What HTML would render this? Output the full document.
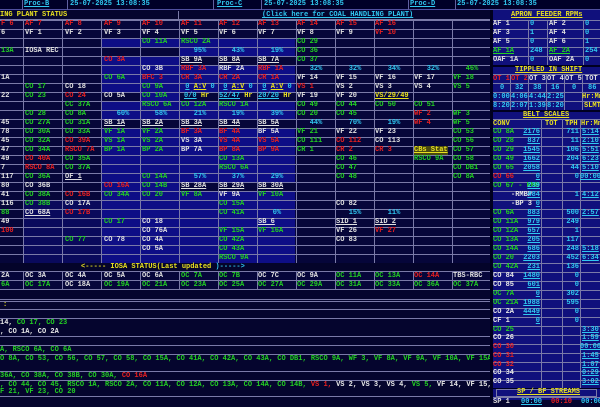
<!DOCTYPE html>
<html><head><meta charset="utf-8"><style>
*{margin:0;padding:0;box-sizing:border-box}
body{width:600px;height:400px;overflow:hidden;background:#05052e;font:bold 7px/9px "Liberation Mono",monospace;color:#e0e0e0;position:relative}
.a{position:absolute}
.R{position:absolute;left:0;width:490px;height:9px}
.R span{position:absolute;top:0;white-space:pre}
.c0{left:1px}.c1{left:25px}.c2{left:65px}.c3{left:104px}.c4{left:142px}.c5{left:181px}.c6{left:219px}.c7{left:258px}.c8{left:297px}.c9{left:336px}.c10{left:375px}.c11{left:414px}.c12{left:453px}
.m{width:38px;text-align:center}
.g{color:#22d022}.r{color:#e82020}.w{color:#e8e8e8}.c{color:#30c8f0}.y{color:#e8e020}
.u{text-decoration:underline}
.bl{background:#0e0e86}
.dk{background:#06063a}
.hl{background-image:repeating-linear-gradient(180deg,#7a7aa8 0 1px,transparent 1px 9px)}
.vl{background-image:repeating-linear-gradient(90deg,#7a7aa8 0 1px,transparent 1px 39px)}
.P span{position:absolute;white-space:pre}
.bs{position:absolute;left:493px;width:107px;height:9px}
.bs b{position:absolute;top:0;white-space:pre}
.bs .l{left:0}.bs .t{right:60px;color:#30c8f0;text-decoration:underline}.bs .p{right:21px;color:#30c8f0}.bs .h{left:89px;color:#30c8f0;text-decoration:underline}
</style></head><body>
<!-- header -->
<div class="a" style="left:0;top:0;width:600px;height:10px;background:#000028;border-bottom:1px solid #5050a0"></div>
<div class="a" style="left:22px;top:0;width:1px;height:10px;background:#6060a0"></div>
<div class="a" style="left:67px;top:0;width:1px;height:10px;background:#6060a0"></div>
<div class="a" style="left:213px;top:0;width:1px;height:10px;background:#6060a0"></div>
<div class="a" style="left:261px;top:0;width:1px;height:10px;background:#6060a0"></div>
<div class="a" style="left:408px;top:0;width:1px;height:10px;background:#6060a0"></div>
<div class="a" style="left:455px;top:0;width:1px;height:10px;background:#6060a0"></div>
<div class="a c u" style="left:24px;top:0">Proc-B</div>
<div class="a c" style="left:70px;top:0">25-07-2025 13:08:35</div>
<div class="a c u" style="left:217px;top:0">Proc-C</div>
<div class="a c" style="left:264px;top:0">25-07-2025 13:08:35</div>
<div class="a c u" style="left:410px;top:0">Proc-D</div>
<div class="a c" style="left:457px;top:0">25-07-2025 13:08:35</div>
<div class="a" style="left:0;top:11px;width:490px;height:9px;background:#05052e;border-bottom:1px solid #7a7aa8"></div>
<div class="a" style="left:178px;top:11px;width:1px;height:9px;background:#7a7aa8"></div>
<div class="a y" style="left:0;top:11px">ING PLANT STATUS</div>
<div class="a c u" style="left:262px;top:11px">(Click here for COAL HANDLING PLANT)</div>

<!-- backgrounds main grid -->
<div class="a dk" style="left:0;top:20px;width:490px;height:243px"></div>
<div class="a bl" style="left:102px;top:38px;width:193px;height:225px"></div>
<div class="a dk" style="left:102px;top:47px;width:77px;height:9px"></div>
<div class="a dk" style="left:179px;top:56px;width:116px;height:9px"></div>
<div class="a dk" style="left:102px;top:92px;width:38px;height:9px"></div>
<div class="a dk" style="left:179px;top:92px;width:116px;height:9px"></div>
<div class="a dk" style="left:102px;top:119px;width:193px;height:9px"></div>
<div class="a dk" style="left:179px;top:182px;width:116px;height:9px"></div>
<div class="a" style="left:23px;top:200px;width:79px;height:63px;background:#0a0a5c"></div>
<div class="a hl" style="left:0;top:20px;width:490px;height:244px"></div>
<div class="a vl" style="left:23px;top:20px;width:468px;height:243px"></div>

<div class="R" style="top:20px"><span class="c0 r">F 6</span><span class="c1 r">AF 7</span><span class="c2 r">AF 8</span><span class="c3 r">AF 9</span><span class="c4 r">AF 10</span><span class="c5 r">AF 11</span><span class="c6 r">AF 12</span><span class="c7 r">AF 13</span><span class="c8 r">AF 14</span><span class="c9 r">AF 15</span><span class="c10 r">AF 16</span></div>
<div class="R" style="top:29px"><span class="c0">6</span><span class="c1">VF 1</span><span class="c2">VF 2</span><span class="c3">VF 3</span><span class="c4">VF 4</span><span class="c5">VF 5</span><span class="c6">VF 6</span><span class="c7">VF 7</span><span class="c8">VF 8</span><span class="c9">VF 9</span><span class="c10 r">VF 10</span></div>
<div class="R" style="top:38px"><span class="c4 g">CO 11A</span><span class="c5 g">RSCO 2A</span><span class="c8 g">CO 29</span></div>
<div class="R" style="top:47px"><span class="c0 g">13A</span><span class="c1">IOSA REC</span><span class="c5 c m">95%</span><span class="c6 c m">43%</span><span class="c7 c m">19%</span><span class="c8 g">CO 36</span></div>
<div class="R" style="top:56px"><span class="c3 r">CO 3A</span><span class="c5 u">SB 9A</span><span class="c6 u">SB 8A</span><span class="c7 u">SB 7A</span><span class="c8 g">CO 37</span></div>
<div class="R" style="top:65px"><span class="c4">CO 3B</span><span class="c5 r">RBF 3A</span><span class="c6">RBF 2A</span><span class="c7 r">RBF 1A</span><span class="c8 c m">32%</span><span class="c9 c m">32%</span><span class="c10 c m">34%</span><span class="c11 c m">32%</span><span class="c12 g m">46%</span></div>
<div class="R" style="top:74px"><span class="c0">1A</span><span class="c3 g">CO 6A</span><span class="c4 r">BFC 3</span><span class="c5 r">CR 3A</span><span class="c6 r">CR 2A</span><span class="c7 r">CR 1A</span><span class="c8">VF 14</span><span class="c9">VF 15</span><span class="c10">VF 16</span><span class="c11">VF 17</span><span class="c12 g">VF 18</span></div>
<div class="R" style="top:83px"><span class="c1 g">CO 17</span><span class="c2">CO 18</span><span class="c4 g">CO 9A</span><span class="c5 m"><b class="c u">0</b> <b class="y u">A:V</b> <b class="c">0</b></span><span class="c6 m"><b class="c u">0</b> <b class="y u">A:V</b> <b class="c">0</b></span><span class="c7 m"><b class="c u">0</b> <b class="y u">A:V</b> <b class="c">0</b></span><span class="c8 r">VS 1</span><span class="c9">VS 2</span><span class="c10">VS 3</span><span class="c11">VS 4</span><span class="c12 g">VS 5</span></div>
<div class="R" style="top:92px"><span class="c0">22</span><span class="c1 g">CO 23</span><span class="c2 r">CO 24</span><span class="c3">CO 5A</span><span class="c4 g">CO 10A</span><span class="c5" style="left:184px"><b class="c u">0/0</b> <b class="y">Hr</b></span><span class="c6"><b class="c u">52/47</b> <b class="y">Hr</b></span><span class="c7"><b class="c u">20/20</b> <b class="y">Hr</b></span><span class="c8">VF 19</span><span class="c9">VF 20</span><span class="c10 y u">VS/29/49</span></div>
<div class="R" style="top:101px"><span class="c2 g">CC 37A</span><span class="c4 g">RSCO 6A</span><span class="c5 g">CO 12A</span><span class="c6 g">RSCO 1A</span><span class="c8 g">CO 49</span><span class="c9 g">CO 44</span><span class="c10 g">CO 50</span><span class="c11 g">CO 51</span></div>
<div class="R" style="top:110px"><span class="c1 g">CO 28</span><span class="c2 g">CO 8A</span><span class="c3 c m">60%</span><span class="c4 c m">58%</span><span class="c5 c m">21%</span><span class="c6 c m">19%</span><span class="c7 c m">39%</span><span class="c8 g">CO 20</span><span class="c9 g">CO 45</span><span class="c11 r">WF 2</span><span class="c12 g">WF 3</span></div>
<div class="R" style="top:119px"><span class="c0">45</span><span class="c1 g">CO 27A</span><span class="c2 g">CO 31A</span><span class="c3 u">SB 1A</span><span class="c4 u">SB 2A</span><span class="c5 u">SB 3A</span><span class="c6 u">SB 4A</span><span class="c7 u">SB 5A</span><span class="c8 c m">44%</span><span class="c9 c m">70%</span><span class="c10 c m">19%</span><span class="c11 r">WF 4</span><span class="c12 g">WF 5</span></div>
<div class="R" style="top:128px"><span class="c0">78</span><span class="c1 g">CO 30A</span><span class="c2 g">CO 33A</span><span class="c3 g">VF 1A</span><span class="c4 g">VF 2A</span><span class="c5 r">BF 3A</span><span class="c6 r">BF 4A</span><span class="c7">BF 5A</span><span class="c8 g">VF 21</span><span class="c9">VF 22</span><span class="c10">VF 23</span><span class="c12 g">CO 53</span></div>
<div class="R" style="top:137px"><span class="c0">45</span><span class="c1 g">CO 32A</span><span class="c2 r">CO 39A</span><span class="c3 g">VS 1A</span><span class="c4 g">VS 2A</span><span class="c5">VS 3A</span><span class="c6 r">VS 4A</span><span class="c7 r">VS 5A</span><span class="c8 g">CO 111</span><span class="c9 r">CO 112</span><span class="c10">CO 113</span><span class="c12 g">CO 56</span></div>
<div class="R" style="top:146px"><span class="c0">47</span><span class="c1 g">CO 34A</span><span class="c2 r">RSCO 7A</span><span class="c3 g">BP 1A</span><span class="c4 g">BP 2A</span><span class="c5">BP 7A</span><span class="c6 r">BP 8A</span><span class="c7 r">BP 9A</span><span class="c8 g">CR 1</span><span class="c9 r">CR 2</span><span class="c10 r">CR 3</span><span class="c11 y u" style="background:#4a4a10">CBs Stat</span><span class="c12 g">CO 57</span></div>
<div class="R" style="top:155px"><span class="c0">49</span><span class="c1 r">CO 40A</span><span class="c2 g">CO 35A</span><span class="c6 g">CO 13A</span><span class="c9 g">CO 46</span><span class="c11 g">RSCO 9A</span><span class="c12 g">CO 58</span></div>
<div class="R" style="top:164px"><span class="c0">7</span><span class="c1 r">RSCO 8A</span><span class="c2 g">CO 37A</span><span class="c6 g">RSCO 6A</span><span class="c9 g">CO 47</span><span class="c12 g">CO DB1</span></div>
<div class="R" style="top:173px"><span class="c0">117</span><span class="c1 g">CO 36A</span><span class="c2 u">OF 1</span><span class="c4 g">CO 14A</span><span class="c5 c m">57%</span><span class="c6 c m">37%</span><span class="c7 c m">29%</span><span class="c9 g">CO 48</span><span class="c12 g">CO 8A</span></div>
<div class="R" style="top:182px"><span class="c0">80</span><span class="c1">CO 36B</span><span class="c3 r">CO 16A</span><span class="c4 g">CO 14B</span><span class="c5 u">SB 28A</span><span class="c6 u">SB 29A</span><span class="c7 u">SB 30A</span></div>
<div class="R" style="top:191px"><span class="c0">41</span><span class="c1 g">CO 38A</span><span class="c2 r">CO 16B</span><span class="c3 g">CO 34A</span><span class="c4 g">CO 20</span><span class="c5 g">VF 8A</span><span class="c6">VF 9A</span><span class="c7 g">VF 10A</span></div>
<div class="R" style="top:200px"><span class="c0">116</span><span class="c1 g">CO 38B</span><span class="c2">CO 17A</span><span class="c6 g">CO 15A</span><span class="c9">CO 82</span></div>
<div class="R" style="top:209px"><span class="c0 g">88</span><span class="c1 u">CO 68A</span><span class="c2 r">CO 17B</span><span class="c6 g">CO 41A</span><span class="c7 c m">0%</span><span class="c9 c m">15%</span><span class="c10 c m">11%</span></div>
<div class="R" style="top:218px"><span class="c0">49</span><span class="c3 g">CO 17</span><span class="c4">CO 18</span><span class="c7 u">SB 6</span><span class="c9 u">SID 1</span><span class="c10 u">SID 2</span></div>
<div class="R" style="top:227px"><span class="c0 r">100</span><span class="c4">CO 76A</span><span class="c6 g">VF 15A</span><span class="c7 g">VF 16A</span><span class="c9">VF 26</span><span class="c10 r">VF 27</span></div>
<div class="R" style="top:236px"><span class="c2 g">CO 77</span><span class="c3">CO 78</span><span class="c4">CO 4A</span><span class="c6 g">CO 42A</span><span class="c9">CO 83</span></div>
<div class="R" style="top:245px"><span class="c4">CO 5A</span><span class="c6 g">CO 43A</span></div>
<div class="R" style="top:254px"><span class="c6 g">RSCO 9A</span></div>

<!-- IOSA status -->
<div class="a" style="left:0;top:263px;width:490px;height:8px;background:#04042a"></div>
<div class="a" style="left:81px;top:263px"><b class="y">&lt;----- IOSA STATUS(Last updated </b><b class="c">)-----&gt;</b></div>
<div class="a dk" style="left:0;top:271px;width:490px;height:19px;border-top:1px solid #7a7aa8;border-bottom:1px solid #7a7aa8"></div>
<div class="a vl" style="left:23px;top:271px;width:468px;height:19px"></div>
<div class="a" style="left:0;top:280px;width:490px;height:1px;background:#7a7aa8"></div>
<div class="R" style="top:272px"><span class="c0">2A</span><span class="c1">OC 3A</span><span class="c2">OC 4A</span><span class="c3">OC 5A</span><span class="c4">OC 6A</span><span class="c5 g">OC 7A</span><span class="c6 g">OC 7B</span><span class="c7">OC 7C</span><span class="c8">OC 9A</span><span class="c9 g">OC 11A</span><span class="c10 g">OC 13A</span><span class="c11 r">OC 14A</span><span class="c12">TBS-RBC</span></div>
<div class="R" style="top:281px"><span class="c0 g">6A</span><span class="c1 g">OC 17A</span><span class="c2">OC 18A</span><span class="c3 g">OC 19A</span><span class="c4 g">OC 21A</span><span class="c5 g">OC 23A</span><span class="c6 g">OC 25A</span><span class="c7 g">OC 27A</span><span class="c8 g">OC 29A</span><span class="c9 g">OC 31A</span><span class="c10 g">OC 33A</span><span class="c11 g">OC 36A</span><span class="c12 g">OC 37A</span></div>

<!-- bottom lines -->
<div class="a" style="left:0;top:299px;width:490px;height:1px;background:#7a7aa8"></div>
<div class="a" style="left:0;top:301px;width:490px;height:1px;background:#7a7aa8"></div>
<div class="a" style="left:0;top:309px;width:490px;height:1px;background:#7a7aa8"></div>
<div class="a" style="left:0;top:318px;width:490px;height:1px;background:#7a7aa8"></div>
<div class="a" style="left:0;top:336px;width:490px;height:1px;background:#7a7aa8"></div>
<div class="a" style="left:0;top:345px;width:490px;height:1px;background:#7a7aa8"></div>
<div class="a" style="left:0;top:354px;width:490px;height:1px;background:#7a7aa8"></div>
<div class="a" style="left:0;top:371px;width:490px;height:1px;background:#7a7aa8"></div>
<div class="a" style="left:0;top:380px;width:490px;height:1px;background:#7a7aa8"></div>
<div class="a" style="left:0;top:396px;width:490px;height:1px;background:#7a7aa8"></div>
<div class="a y" style="left:3px;top:301px">:</div>
<div class="a" style="left:0;top:319px"><b class="w">14, </b><b class="g">CO 17, CO 23</b></div>
<div class="a w" style="left:0;top:328px">, CO 1A, CO 2A</div>
<div class="a g" style="left:0;top:346px">A, RSCO 6A, CO 6A</div>
<div class="a g" style="left:0;top:355px">O 8A, CO 53, CO 56, CO 57, CO 58, CO 15A, CO 41A, CO 42A, CO 43A, CO DB1, RSCO 9A, WF 3, VF 8A, VF 9A, VF 10A, VF 15A,</div>
<div class="a" style="left:0;top:372px"><b class="g">36A, CO 38A, CO 38B, CO 30A, </b><b class="r">CO 16A</b></div>
<div class="a" style="left:0;top:381px;white-space:pre"><b class="g">, CO 44, CO 45, RSCO 1A, RSCO 2A, CO 11A, CO 12A, CO 13A, CO 14A, CO 14B, </b><b class="r">VS 1,</b><b class="w"> VS 2, VS 3, VS 4, </b><b class="g">VS 5,</b><b class="w"> VF 14, VF 15, VF</b></div>
<div class="a g" style="left:0;top:388px">F 21, VF 23, CO 20</div>

<!-- right panel -->
<div class="a" style="left:490px;top:10px;width:3px;height:390px;background:#000020"></div>
<div class="a" style="left:493px;top:10px;width:107px;height:390px;background:#10107c"></div>
<div class="a P" style="left:493px;top:10px;width:107px;height:390px">
<div class="a" style="left:0;top:10px;width:107px;height:46px;background-image:repeating-linear-gradient(180deg,#7a7aa8 0 1px,transparent 1px 9px)"></div>
<div class="a" style="left:35px;top:10px;width:1px;height:45px;background:#7a7aa8"></div>
<div class="a" style="left:54px;top:10px;width:1px;height:45px;background:#7a7aa8"></div>
<div class="a" style="left:90px;top:10px;width:1px;height:45px;background:#7a7aa8"></div>
<span class="y u" style="left:18px;top:1px">APRON FEEDER RPMs</span>
<span style="left:0;top:10px">AF 1</span><span class="c" style="left:37px;top:10px">0</span><span style="left:56px;top:10px">AF 2</span><span class="c" style="left:92px;top:10px">0</span>
<span style="left:0;top:19px">AF 3</span><span class="c" style="left:37px;top:19px">1</span><span style="left:56px;top:19px">AF 4</span><span class="c" style="left:92px;top:19px">0</span>
<span style="left:0;top:28px">AF 5</span><span class="c" style="left:37px;top:28px">0</span><span style="left:56px;top:28px">AF 6</span><span class="c" style="left:92px;top:28px">1</span>
<span class="g u" style="left:0;top:37px">AF 1A</span><span class="c" style="left:37px;top:37px">248</span><span class="g u" style="left:56px;top:37px">AF 2A</span><span class="c" style="left:92px;top:37px">254</span>
<span style="left:0;top:46px">OAF 1A</span><span class="c" style="left:37px;top:46px">0</span><span style="left:56px;top:46px">OAF 2A</span><span class="c" style="left:92px;top:46px">0</span>
<div class="a" style="left:0;top:55px;width:107px;height:2px;background:#000020"></div>
<span class="y u" style="left:22px;top:56px">TIPPLED IN SHIFT</span>
<div class="a" style="left:0;top:64px;width:107px;height:37px;background-image:repeating-linear-gradient(180deg,#7a7aa8 0 1px,transparent 1px 9px)"></div>
<div class="a" style="left:0;top:64px;width:107px;height:36px;background-image:repeating-linear-gradient(90deg,transparent 0 17px,#7a7aa8 17px 18px)"></div>
<span class="r" style="left:0;top:65px">OT 1</span><span class="r" style="left:18px;top:65px">OT 2</span><span style="left:36px;top:65px">OT 3</span><span style="left:54px;top:65px">OT 4</span><span style="left:72px;top:65px">OT 5</span><span style="left:92px;top:65px">TOT</span>
<span class="c" style="left:7px;top:74px">0</span><span class="c" style="left:22px;top:74px">32</span><span class="c" style="left:40px;top:74px">38</span><span class="c" style="left:58px;top:74px">16</span><span class="c" style="left:79px;top:74px">0</span><span class="c" style="left:95px;top:74px">86</span>
<span class="c" style="left:0;top:83px">0:00</span><span class="c" style="left:18px;top:83px">4:06</span><span class="c" style="left:36px;top:83px">4:44</span><span class="c" style="left:54px;top:83px">2:25</span><span class="y" style="left:89px;top:83px">Hr:Mn</span>
<span class="c" style="left:0;top:92px">8:20</span><span class="c" style="left:18px;top:92px">2:07</span><span class="c" style="left:36px;top:92px">1:39</span><span class="c" style="left:54px;top:92px">8:20</span><span class="y" style="left:91px;top:92px">SLMT</span>
<div class="a" style="left:0;top:100px;width:107px;height:2px;background:#000020"></div>
<span class="y u" style="left:30px;top:101px">BELT SCALES</span>
<div class="a" style="left:0;top:109px;width:107px;height:1px;background:#7a7aa8"></div>
<div class="a" style="left:48px;top:109px;width:1px;height:269px;background:#7a7aa8"></div>
<div class="a" style="left:69px;top:109px;width:1px;height:269px;background:#7a7aa8"></div>
<div class="a" style="left:87px;top:109px;width:1px;height:269px;background:#7a7aa8"></div>
<div class="a" style="left:0;top:118px;width:107px;height:261px;background-image:repeating-linear-gradient(180deg,#7a7aa8 0 1px,transparent 1px 9px)"></div>
<span class="y" style="left:0;top:110px">CONV</span><span class="y" style="left:52px;top:110px">TOT</span><span class="y" style="left:72px;top:110px">TPH</span><span class="y" style="left:88px;top:110px">Hr:Mn</span>
<div class="a" style="left:0;top:378px;width:107px;height:1px;background:#000020"></div>
<div class="a" style="left:3px;top:379px;width:101px;height:8px;border:1px solid #7a7aa8"></div>
<span class="y u" style="left:24px;top:378px">SP / BF STREAMS</span>
<div class="a" style="left:0;top:387px;width:107px;height:1px;background:#7a7aa8"></div>
<span style="left:0;top:388px">SP 1</span><span class="c u" style="left:28px;top:388px">00:00</span><span class="r" style="left:58px;top:388px">00:10</span><span class="c" style="left:88px;top:388px">00:00</span>
</div>
<div class="bs" style="top:128px"><b class="l g">CO 8A</b><b class="t">2176</b><b class="p">711</b><b class="h">5:14</b></div>
<div class="bs" style="top:137px"><b class="l g">CO 28</b><b class="t">837</b><b class="p">11</b><b class="h">2:10</b></div>
<div class="bs" style="top:146px"><b class="l g">CO 29</b><b class="t">1545</b><b class="p">106</b><b class="h">5:51</b></div>
<div class="bs" style="top:155px"><b class="l g">CO 49</b><b class="t">1662</b><b class="p">204</b><b class="h">6:23</b></div>
<div class="bs" style="top:164px"><b class="l g">CO 65</b><b class="t">2058</b><b class="p">44</b><b class="h">5:10</b></div>
<div class="bs" style="top:173px"><b class="l r">CO 66</b><b class="t">0</b><b class="p">0</b><b class="h" style="left:87px">00:00</b></div>
<div class="bs" style="top:182px"><b class="l g">CO 67 - RMB</b><b class="t">239</b></div>
<div class="bs" style="top:191px"><b class="l w" style="left:18px">-RMBP</b><b class="t">484</b><b class="p">1</b><b class="h">4:12</b></div>
<div class="bs" style="top:200px"><b class="l w" style="left:18px">-BP 3</b><b class="t">0</b></div>
<div class="bs" style="top:209px"><b class="l g">CO 6A</b><b class="t">883</b><b class="p">500</b><b class="h">2:57</b></div>
<div class="bs" style="top:218px"><b class="l g">CO 11A</b><b class="t">979</b><b class="p">249</b></div>
<div class="bs" style="top:227px"><b class="l g">CO 12A</b><b class="t">657</b><b class="p">1</b></div>
<div class="bs" style="top:236px"><b class="l g">CO 13A</b><b class="t">205</b><b class="p">117</b></div>
<div class="bs" style="top:245px"><b class="l g">CO 14A</b><b class="t">686</b><b class="p">248</b><b class="h">5:18</b></div>
<div class="bs" style="top:254px"><b class="l g">CO 20</b><b class="t">2203</b><b class="p">452</b><b class="h">6:34</b></div>
<div class="bs" style="top:263px"><b class="l g">CO 42A</b><b class="t">231</b><b class="p">136</b></div>
<div class="bs" style="top:272px"><b class="l w">CO 84</b><b class="t">1480</b><b class="p">0</b></div>
<div class="bs" style="top:281px"><b class="l w">CO 85</b><b class="t">601</b><b class="p">0</b></div>
<div class="bs" style="top:290px"><b class="l g">OC 7A</b><b class="t">0</b><b class="p">302</b></div>
<div class="bs" style="top:299px"><b class="l g">OC 21A</b><b class="t">1988</b><b class="p">595</b></div>
<div class="bs" style="top:308px"><b class="l w">CO 2A</b><b class="t">4449</b><b class="p">0</b></div>
<div class="bs" style="top:317px"><b class="l w">CF 1</b><b class="t">0</b><b class="p">0</b></div>
<div class="bs" style="top:326px"><b class="l g">CO 25</b><b class="h">3:30</b></div>
<div class="bs" style="top:334px"><b class="l w">CO 26</b><b class="h">1:59</b></div>
<div class="bs" style="top:343px"><b class="l r">CO 30</b><b class="h" style="left:87px">00:00</b></div>
<div class="bs" style="top:352px"><b class="l r">CO 31</b><b class="h">1:45</b></div>
<div class="bs" style="top:361px"><b class="l r">CO 32</b><b class="h">1:07</b></div>
<div class="bs" style="top:369px"><b class="l w">CO 34</b><b class="h">0:29</b></div>
<div class="bs" style="top:378px"><b class="l w">CO 35</b><b class="h">3:02</b></div>
</body></html>
